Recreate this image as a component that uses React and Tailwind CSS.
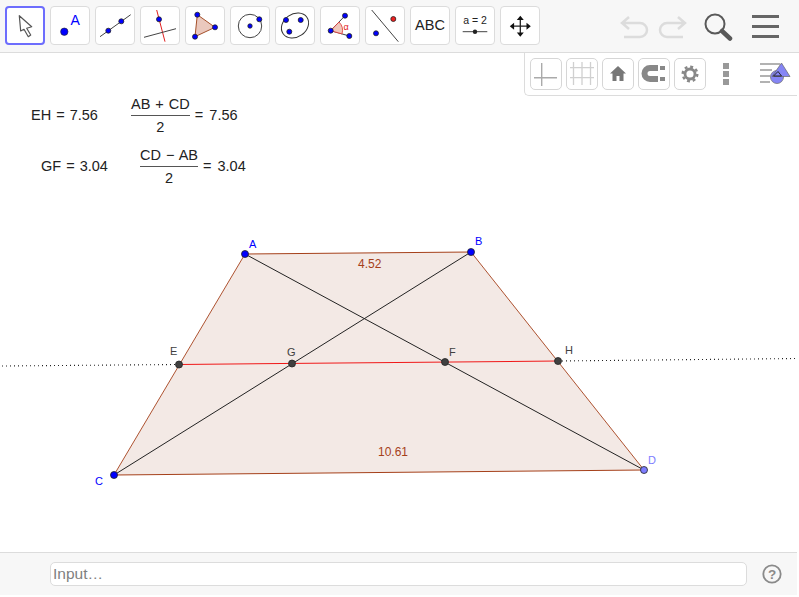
const FONT = { fontFamily: '"Liberation Sans", Arial, sans-serif' };

const Pt = ({ x, y, r = 3.5, f = "#0000ff", s = "#222" }) => (
  <circle cx={x} cy={y} r={r} fill={f} stroke={s} strokeWidth="0.8" />
);

const tools = [
  <g key="1"><circle cx="14.300" cy="25.700" r="3.700" fill="#0000ff" stroke="#222" strokeWidth=".6" /><text x="20.500" y="19" fontSize="14" fill="#0000ff" style={FONT}>A</text></g>,
  <g key="2"><path d="M5 30.700 L35.700 8.700" stroke="#444" strokeWidth="1" /><Pt x={13.300} y={24.700} r={2.500} /><Pt x={26.300} y={15.300} r={2.500} /></g>,
  <g key="3"><path d="M16.700 4 L25 35.700" stroke="#e02020" strokeWidth="1" /><path d="M4 31.300 L36 22.700" stroke="#444" strokeWidth="1" /><Pt x={19} y={13.300} r={2.500} /></g>,
  <g key="4"><path d="M12.300 8.700 L30 21.300 L10 30.700 Z" fill="#eac8bd" stroke="#a5502a" strokeWidth="1" /><Pt x={12.300} y={8.700} r={2.500} /><Pt x={30} y={21.300} r={2.500} /><Pt x={10} y={30.700} r={2.500} /></g>,
  <g key="5"><circle cx="20" cy="20" r="11.700" fill="none" stroke="#444" strokeWidth="1" /><Pt x={20} y={20} r={2.200} /><Pt x={29.300} y={13.300} r={2.500} /></g>,
  <g key="6"><ellipse cx="20" cy="19.500" rx="14.500" ry="11.500" transform="rotate(-35 20 19.500)" fill="none" stroke="#333" strokeWidth="1" /><Pt x={11} y={14} r={2.500} /><Pt x={25.700} y={14} r={2.500} /><Pt x={14.300} y={25.700} r={2.500} /></g>,
  <g key="7"><path d="M10.700 24.700 L25 9.700 M10.700 24.700 L29.300 30" stroke="#444" strokeWidth="1" /><path d="M10.700 24.700 L19 16 A12 12 0 0 1 22 27.900 Z" fill="#f0c8bc" stroke="#e03030" strokeWidth=".8" /><Pt x={10.700} y={24.700} r={2.500} /><Pt x={25} y={9.700} r={2.500} /><Pt x={29.300} y={30} r={2.500} /><text x="23.500" y="23.500" fontSize="9" fill="#e02020" style={FONT}>α</text></g>,
  <g key="8"><path d="M6.700 4 L33.300 35.700" stroke="#444" strokeWidth="1" /><Pt x={28.300} y={13} r={2.500} f="#ee2020" /><Pt x={11} y={27.300} r={2.500} /></g>,
];

const Tool = ({ children, selected }) => (
  <div className={selected ? "w-[40px] h-[39px] shrink-0 rounded-[4px] bg-white border-2 border-[#6d6dfd]" : "w-[40px] h-[39px] shrink-0 rounded-[4px] bg-white border border-[#dcdcdc]"}>
    {children}
  </div>
);

const Svg = ({ children }) => (
  <svg width="40" height="39" viewBox="0 0 40 39" className="block -m-px">{children}</svg>
);

const StyleBtn = ({ children }) => (
  <div className="w-[32px] h-[32px] shrink-0 rounded-[5px] border border-[#d6d6d6] bg-white">
    <svg width="30" height="30" viewBox="0 0 30 30" className="block">{children}</svg>
  </div>
);

const Frac = ({ top, v }) => (
  <div className="flex items-center text-[14.500px] leading-none text-[#222] [word-spacing:1px]">
    <div className="flex flex-col items-center">
      <span className="pb-[3px] whitespace-nowrap">{top}</span>
      <span className="w-full h-px bg-[#555]" />
      <span className="pt-[4px]">2</span>
    </div>
    <span className="ml-[5px] whitespace-nowrap [word-spacing:2px]">= {v}</span>
  </div>
);

export default function App() {
  return (
    <div className="relative w-[799px] h-[597px] overflow-hidden bg-white flex flex-col" style={FONT}>
      <header className="h-[53px] shrink-0 bg-[#f7f7f7] border-b border-[#dcdcdc] flex items-start pt-[6px] pl-[5px] pr-[20px]">
        <div className="flex gap-[5px]">
          <Tool selected>
            <svg width="36" height="35" viewBox="2 2 36 35" className="block">
              <path d="M14.300 9.700 L15.700 25 L19 23.300 L23.300 30.700 L25.700 29 L21.700 22.300 L26.700 20.700 Z" fill="#fff" stroke="#555" strokeWidth="1.200" strokeLinejoin="round" />
            </svg>
          </Tool>
          {tools.map((t, i) => <Tool key={i}><Svg>{t}</Svg></Tool>)}
          <Tool><div className="h-full flex items-center justify-center text-[14.500px] text-[#222]">ABC</div></Tool>
          <Tool>
            <Svg>
              <text x="20" y="18" fontSize="10.500" textAnchor="middle" fill="#222" style={FONT}>a = 2</text>
              <path d="M7.700 25.700 H32.300" stroke="#444" strokeWidth="1" />
              <circle cx="20" cy="25.700" r="2.200" fill="#222" />
            </Svg>
          </Tool>
          <Tool>
            <Svg>
              <path d="M20.300 12 V28 M12 20.200 H28" stroke="#222" strokeWidth="1.300" />
              <path d="M20.300 9.700 L16.800 14 H23.800 Z M20.300 30.700 L16.800 26.400 H23.800 Z M9.800 20.200 L14.100 16.700 V23.700 Z M30.800 20.200 L26.500 16.700 V23.700 Z" fill="#111" />
            </Svg>
          </Tool>
        </div>
        <div className="ml-auto flex items-center h-[40px]">
          <svg width="30" height="24" viewBox="0 0 30 24" className="mt-[1px]"><path d="M2 8 H20 A7 7 0 0 1 20 22 H4 M9 2 L2 8 L9 14" fill="none" stroke="#dcdcdc" strokeWidth="2.500" /></svg>
          <svg width="30" height="24" viewBox="0 0 30 24" className="ml-[7px] mt-[1px]"><path d="M28 8 H10 A7 7 0 0 0 10 22 H26 M21 2 L28 8 L21 14" fill="none" stroke="#dcdcdc" strokeWidth="2.500" /></svg>
          <svg width="30" height="30" viewBox="0 0 30 30" className="ml-[16px] mt-[1px]">
            <circle cx="12" cy="12" r="9.500" fill="none" stroke="#595959" strokeWidth="2" />
            <path d="M19 19 L27 26.500" stroke="#595959" strokeWidth="4.500" strokeLinecap="round" />
          </svg>
          <div className="ml-[19px] w-[27px] flex flex-col gap-[7px]">
            <span className="h-[3px] bg-[#666]" /><span className="h-[3px] bg-[#666]" /><span className="h-[3px] bg-[#666]" />
          </div>
        </div>
      </header>

      <main className="relative flex-1">
        <svg width="799" height="499" viewBox="0 53 799 499" className="absolute left-0 top-0">
          <polygon points="245,254 471,252 644,470 114,475" fill="#f3e9e5" />
          <path d="M2 366 L179 364.500" stroke="#222" strokeWidth="1.100" strokeDasharray="1 3" />
          <path d="M558 361 L798 358.500" stroke="#222" strokeWidth="1.100" strokeDasharray="1 3" />
          <path d="M245 254 L471 252 M114 475 L644 470" stroke="#a5401a" strokeWidth="1" />
          <path d="M245 254 L114 475 M471 252 L644 470" stroke="#a5401a" strokeWidth=".9" />
          <path d="M179 364.500 L558 361" stroke="#f01818" strokeWidth="1.100" />
          <path d="M245 254 L644 470 M471 252 L114 475" stroke="#222" strokeWidth="1" />
          <Pt x={179} y={364.500} f="#404040" />
          <Pt x={292} y={363.500} f="#404040" />
          <Pt x={445} y={362} f="#404040" />
          <Pt x={558} y={361} f="#404040" />
          <Pt x={245} y={254} />
          <Pt x={471} y={252} />
          <Pt x={114} y={475} />
          <Pt x={644} y={470} f="#7d7dff" />
          <g fontSize="11" style={FONT}>
            <text x="249" y="248" fill="#0000ff">A</text>
            <text x="475" y="245" fill="#0000ff">B</text>
            <text x="95" y="485" fill="#0000ff">C</text>
            <text x="648" y="464" fill="#7d7dff">D</text>
            <text x="170" y="355" fill="#404040">E</text>
            <text x="287" y="356" fill="#404040">G</text>
            <text x="449" y="356" fill="#404040">F</text>
            <text x="565" y="354" fill="#404040">H</text>
            <text x="358" y="268" fontSize="12" fill="#a5401a">4.52</text>
            <text x="378" y="456" fontSize="12" fill="#a5401a">10.61</text>
          </g>
        </svg>

        <div className="absolute left-[31px] top-[54px] flex items-center text-[14.500px] leading-none text-[#222] h-[16px] [word-spacing:1px]">EH = 7.56</div>
        <div className="absolute left-[131px] top-[44px]"><Frac top="AB + CD" v="7.56" /></div>
        <div className="absolute left-[41px] top-[105px] flex items-center text-[14.500px] leading-none text-[#222] h-[16px] [word-spacing:1px]">GF = 3.04</div>
        <div className="absolute left-[140px] top-[95px]"><Frac top="CD − AB" v="3.04" /></div>

        <div className="absolute right-[2px] top-0 w-[273px] h-[43px] bg-white border-l border-b border-[#dcdcdc] rounded-bl-[5px] flex items-center pl-[5px] gap-[4px]">
          <StyleBtn><path d="M10.700 4 V27 M3 18.700 H26" stroke="#aaa" strokeWidth="1.400" /></StyleBtn>
          <StyleBtn><path d="M6.500 3 V26 M15 3 V26 M23.500 3 V26 M3 8.700 H27 M3 18.700 H27" stroke="#d0d0d0" strokeWidth="1.300" /></StyleBtn>
          <StyleBtn><path d="M15 7 L7 14.500 H9.500 V22 H13.500 V17 H16.500 V22 H20.500 V14.500 H23 Z" fill="#777" /></StyleBtn>
          <StyleBtn><path d="M19 6 H11 A8.500 8.500 0 0 0 11 23 H19 V17 H11 A2.500 2.500 0 0 1 11 12 H19 Z" fill="#888" /><path d="M21 7 H26 V11 H21 Z M21 18 H26 V22 H21 Z" fill="#888" /></StyleBtn>
          <StyleBtn><circle cx="15" cy="15" r="5" fill="none" stroke="#888" strokeWidth="2.800" /><circle cx="15" cy="15" r="7.300" fill="none" stroke="#888" strokeWidth="2.400" strokeDasharray="2.900 2.830" /></StyleBtn>
          <div className="ml-[13px] flex flex-col gap-[2px] w-[6px]">
            <span className="h-[6px] bg-[#999]" /><span className="h-[6px] bg-[#999]" /><span className="h-[6px] bg-[#999]" />
          </div>
          <svg width="32" height="24" viewBox="0 0 32 24" className="ml-[27px]">
            <path d="M0 2 H20 M0 8 H12 M0 14 H10 M0 20 H10" stroke="#999" strokeWidth="1.600" />
            <circle cx="17" cy="15" r="6.500" fill="#8585f5" stroke="#666" strokeWidth=".7" />
            <path d="M21.500 1 L30 14.500 H12 Z" fill="#8585f5" stroke="#666" strokeWidth=".7" />
            <path d="M18 9.500 L21.500 14 H13.500 Z" fill="none" stroke="#222" strokeWidth="1" />
          </svg>
        </div>
      </main>

      <footer className="h-[43px] mb-[2px] mr-[2px] shrink-0 bg-[#f7f7f7] border-t border-[#dcdcdc] flex items-center pl-[50px] pr-[15px] pb-[1px]">
        <div className="flex-1 h-[24px] rounded-[5px] bg-white border border-[#dcdcdc] flex items-center pl-[2px] text-[15.500px] text-[#808080]">Input…</div>
        <svg width="20" height="20" viewBox="0 0 20 20" className="ml-[15px]">
          <circle cx="10" cy="10" r="8.700" fill="none" stroke="#8a8a8a" strokeWidth="1.800" />
          <text x="10" y="14.800" fontSize="13.500" fontWeight="700" textAnchor="middle" fill="#8a8a8a" style={FONT}>?</text>
        </svg>
      </footer>
    </div>
  );
}
